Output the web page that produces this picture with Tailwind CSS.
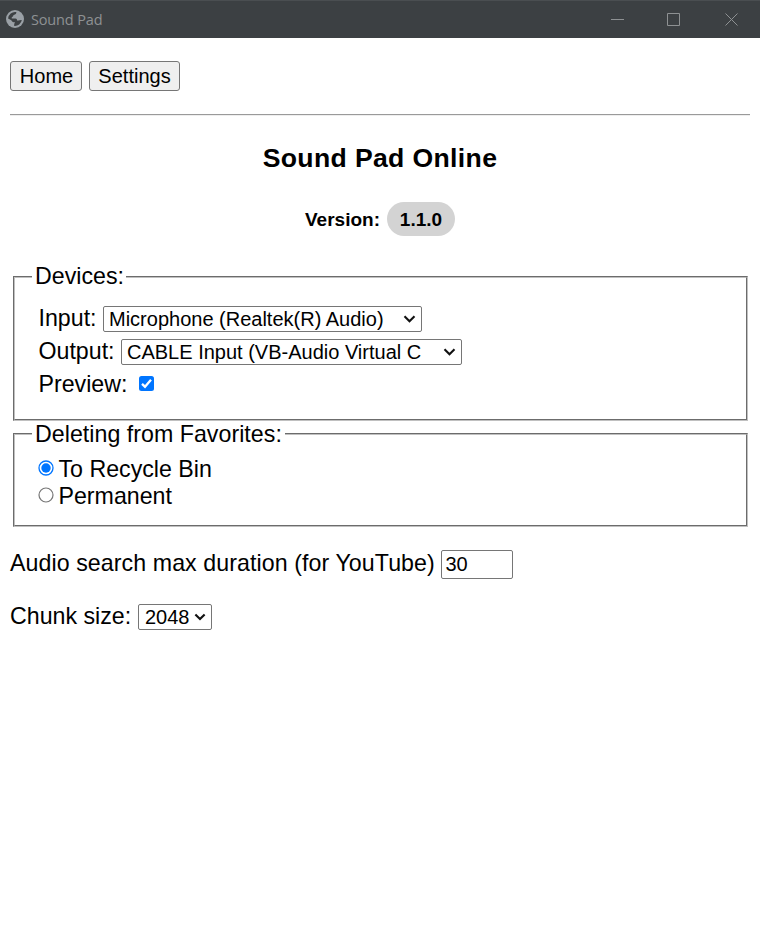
<!DOCTYPE html>
<html lang="en">
<head>
<meta charset="utf-8">
<title>Sound Pad</title>
<script src="https://cdn.jsdelivr.net/npm/@tailwindcss/browser@4"></script>
</head>
<body class="w-[760px] h-[930px] overflow-hidden bg-white text-black font-['Liberation_Sans',Arial,sans-serif] text-[23.2px] leading-[27px] whitespace-nowrap">
<header class="h-[38px] bg-[#3c4043] border-t border-[#4a4e51] flex items-center text-[#8e9193]">
  <svg class="ml-[6px] -mt-[1px] w-[18px] h-[18px] shrink-0" viewBox="0 0 18 18"><circle cx="9" cy="9" r="9" fill="#9aa0a6"/><path d="M10.3 2.1C10.6 3.7 9.5 4.8 7.8 5C7.2 5.2 7.3 6.2 6.6 6.7C5.8 7 5.4 7.6 5.8 8.4H9.4C10.7 8.4 11.1 9.3 11 10.4H12.4C13.4 10.4 14.2 9.7 15.8 10A7 7 0 0 1 8.2 15.9V14.5C8.2 13.5 8.9 12.9 9 12.2H7.7C6.3 12.2 6 11.2 5.3 10.3L2.1 8.6A6.9 6.9 0 0 1 10.3 2.1Z" fill="#3c4043"/></svg>
  <span class="ml-[7px] font-['Open_Sans','Noto_Sans',sans-serif] text-[14.5px] tracking-[-0.15px] leading-[20px]">Sound Pad</span>
  <svg class="ml-auto mr-[22px] w-[127px] h-[13px]" viewBox="0 0 127 13" fill="none" stroke="#8e9193"><path d="M0 6.5H13M56.5 .5H68.5V12.5H56.5Z"/><path d="M114.5 .5L126.5 12.5M126.5 .5L114.5 12.5"/></svg>
</header>
<main class="px-[10px] pt-[23px]">
  <nav class="flex gap-[7px] text-[20px] leading-[28px]">
    <button class="w-[72px] h-[30px] border border-[#767676] rounded-[3px] bg-[#efefef] pl-[1px]">Home</button>
    <button class="w-[91px] h-[30px] border border-[#767676] rounded-[3px] bg-[#efefef]">Settings</button>
  </nav>
  <hr class="mt-[23px] h-[2px] border-t border-b border-t-[#9a9a9a] border-b-[#eee]">
  <h1 class="mt-[26px] h-[33px] leading-[33px] text-center font-bold text-[26.6px] tracking-[0.35px]">Sound Pad Online</h1>
  <div class="mt-[27px] h-[34px] flex justify-center items-center gap-[6px] font-bold text-[19px]"><span class="w-[76px]">Version:</span><span class="w-[68px] h-[34px] leading-[35px] rounded-full bg-[#d3d3d3] text-center">1.1.0</span></div>

  <section class="mt-[40px] ml-[3px] mr-[2px] h-[145px] border-2 [border-style:groove] border-[#c0c0c0] pl-[23px]">
    <div class="-mt-[13px] -ml-[6px] w-[94px] h-[23px] leading-[23px] pl-[3px] bg-white">Devices:</div>
    <div class="mt-[17px] flex flex-col gap-[6px]">
      <label class="h-[27px] flex items-center gap-[6px] pl-[1px]"><span class="w-[58px] -ml-[.5px] mr-[.5px]">Input:</span>
        <span class="w-[319px] h-[26px] border border-[#767676] rounded-[2px] flex items-center justify-between pl-[5px] pr-[5px] text-[20px] leading-[24px]">Microphone (Realtek(R) Audio)<svg class="w-[13px] h-[8px]" viewBox="0 0 13 8" fill="none" stroke="#111" stroke-width="2.1"><path d="M1.5 1.2L6.5 6.2L11.5 1.2"/></svg></span></label>
      <label class="h-[27px] flex items-center gap-[6px] pl-[1px]"><span class="w-[76px] -ml-[.5px] mr-[.5px]">Output:</span>
        <span class="w-[341px] h-[26px] border border-[#767676] rounded-[2px] flex items-center justify-between pl-[5px] pr-[5px] text-[20px] leading-[24px]">CABLE Input (VB-Audio Virtual C<svg class="w-[13px] h-[8px]" viewBox="0 0 13 8" fill="none" stroke="#111" stroke-width="2.1"><path d="M1.5 1.2L6.5 6.2L11.5 1.2"/></svg></span></label>
      <label class="h-[27px] flex items-center gap-[11px] pl-[1px]"><span class="w-[89px] -ml-[.5px] mr-[.5px]">Preview:</span>
        <svg class="w-[15px] h-[15px] -mt-[2px]" viewBox="0 0 15 15"><rect width="15" height="15" rx="2.5" fill="#0075ff"/><path d="M3 7.8L6 10.7L12 3.7" fill="none" stroke="#fff" stroke-width="2.3"/></svg></label>
    </div>
  </section>

  <section class="mt-[12px] ml-[3px] mr-[2px] h-[94px] border-2 [border-style:groove] border-[#c0c0c0] pl-[23px]">
    <div class="-mt-[13px] -ml-[6px] w-[253px] h-[25px] leading-[25px] pl-[3px] tracking-[0.03px] bg-white">Deleting from Favorites:</div>
    <label class="mt-[9px] h-[27px] flex items-center gap-[4.5px]"><svg class="w-[16px] h-[16px] -mt-[3px]" viewBox="0 0 16 16"><circle cx="8" cy="8" r="7" fill="#fff" stroke="#0075ff" stroke-width="1.3"/><circle cx="8" cy="8" r="4.7" fill="#0075ff"/></svg>To Recycle Bin</label>
    <label class="h-[27px] flex items-center gap-[4.5px]"><svg class="w-[16px] h-[16px] -mt-[3px]" viewBox="0 0 16 16"><circle cx="8" cy="8" r="7" fill="#fff" stroke="#767676" stroke-width="1.2"/></svg>Permanent</label>
  </section>

  <label class="mt-[23px] h-[29px] flex items-center"><span class="w-[431px] -mt-[2px] tracking-[0.075px]">Audio search max duration (for YouTube)</span><span class="w-[72px] h-[29px] border border-[#767676] rounded-[2px] pl-[3.5px] text-[20px] leading-[27px]">30</span></label>
  <label class="mt-[25px] h-[26px] flex items-center"><span class="w-[128px] -mt-[2px]">Chunk size:</span><span class="w-[74px] h-[26px] border border-[#767676] rounded-[2px] flex items-center justify-between pl-[6px] pr-[5px] text-[20px] leading-[24px]">2048<svg class="w-[12px] h-[8px]" viewBox="0 0 13 8" fill="none" stroke="#111" stroke-width="2.3"><path d="M1.5 1.2L6.5 6.2L11.5 1.2"/></svg></span></label>
</main>
</body>
</html>
